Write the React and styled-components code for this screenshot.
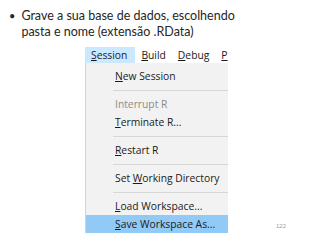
import React from 'react'
import styled, { createGlobalStyle } from 'styled-components'

const GlobalStyle = createGlobalStyle`
  html, body {
    margin: 0;
    padding: 0;
    background: #fff;
  }
`

const Mn = ({ children }) => <u>{children}</u>

const topMenus = [
  { key: 'S', rest: 'ession', active: true },
  { key: 'B', rest: 'uild' },
  { key: 'D', rest: 'ebug' },
  { key: 'P', rest: '' },
]

const items = [
  { pre: '', key: 'N', rest: 'ew Session' },
  { sep: true },
  { pre: 'Interrupt R', key: '', rest: '', disabled: true },
  { pre: '', key: 'T', rest: 'erminate R...' },
  { sep: true },
  { pre: '', key: 'R', rest: 'estart R' },
  { sep: true },
  { pre: 'Set ', key: 'W', rest: 'orking Directory' },
  { sep: true },
  { pre: '', key: 'L', rest: 'oad Workspace...' },
  { pre: '', key: 'S', rest: 'ave Workspace As...', selected: true },
]

export default function App() {
  return (
    <Slide>
      <GlobalStyle />
      <Bullets>
        <BulletItem>
          <Dot>•</Dot>
          <span>Grave a sua base de dados, escolhendo pasta e nome (extensão .RData)</span>
        </BulletItem>
      </Bullets>

      <Bottom>
        <Screenshot>
          <MenuBar>
            {topMenus.map((m) => (
              <TopMenu key={m.key} active={m.active}>
                <span><Mn>{m.key}</Mn>{m.rest}</span>
              </TopMenu>
            ))}
          </MenuBar>
          <Panel>
            {items.map((it, i) =>
              it.sep ? (
                <Separator key={i} />
              ) : (
                <Item key={i} disabled={it.disabled} selected={it.selected}>
                  <span>
                    {it.pre}
                    {it.key && <Mn>{it.key}</Mn>}
                    {it.rest}
                  </span>
                </Item>
              )
            )}
          </Panel>
        </Screenshot>
        <PageNumber>122</PageNumber>
      </Bottom>
    </Slide>
  )
}

const Slide = styled.div`
  width: 320px;
  height: 240px;
  display: flex;
  flex-direction: column;
  box-sizing: border-box;
  padding-top: 8px;
  overflow: hidden;
`

const Bullets = styled.div`
  padding-left: 9px;
  width: 230px;
  font-family: Lato, 'Liberation Sans', sans-serif;
  font-size: 12.5px;
  line-height: 16px;
  color: #262626;
`

const BulletItem = styled.div`
  display: flex;
  gap: 6px;
`

const Dot = styled.span`
  font-size: 11px;
`

const Bottom = styled.div`
  display: flex;
  align-items: flex-end;
  margin-top: 7px;
`

const Screenshot = styled.div`
  margin-left: 85px;
  width: 143px;
  display: flex;
  flex-direction: column;
  font-family: 'Open Sans', 'Noto Sans', sans-serif;
  font-size: 10.3px;
  color: #1a1a1a;
`

const MenuBar = styled.div`
  display: flex;
  height: 16px;
  align-items: stretch;
  background: #fff;
  overflow: hidden;
`

const TopMenu = styled.div`
  display: flex;
  flex-shrink: 0;
  align-items: center;
  padding: ${(p) => (p.active ? '0 8px 0 6px' : '0 6px')};
  background: ${(p) => (p.active ? '#cce8ff' : 'transparent')};
  white-space: nowrap;
`

const Panel = styled.div`
  display: flex;
  flex-direction: column;
  background: #f2f2f2;
  border-left: 1px solid #d4d4d4;
  padding-top: 4px;
`

const Item = styled.div`
  height: 18px;
  display: flex;
  align-items: center;
  padding-left: 29px;
  white-space: nowrap;
  color: ${(p) => (p.disabled ? '#8c8c8c' : '#1a1a1a')};
  background: ${(p) => (p.selected ? '#91c9f7' : 'transparent')};
`

const Separator = styled.div`
  height: 10px;
  display: flex;
  align-items: center;
  padding-left: 27px;

  &::after {
    content: '';
    flex: 1;
    height: 1px;
    background: #d7d7d7;
  }
`

const PageNumber = styled.div`
  margin-left: 48px;
  margin-bottom: 4px;
  font-family: 'Liberation Sans', sans-serif;
  font-size: 6px;
  color: #a0a0a0;
`
